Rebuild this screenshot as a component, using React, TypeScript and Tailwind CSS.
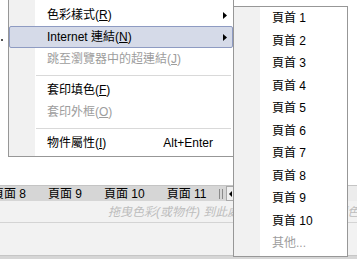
import type { ReactNode } from 'react'

const font = "font-['Liberation_Sans','Noto_Sans_CJK_TC',sans-serif]"

function Arrow() {
  return (
    <svg width="4" height="7" viewBox="0 0 4 7" className="shrink-0">
      <path d="M0 0 L4 3.5 L0 7 Z" fill="#000" />
    </svg>
  )
}

function Mn({ label, k }: { label: string; k: string }) {
  return (
    <span>
      {label}(<u>{k}</u>)
    </span>
  )
}

type ItemProps = {
  children: ReactNode
  disabled?: boolean
  active?: boolean
  arrow?: boolean
  shortcut?: string
}

function Item({ children, disabled, active, arrow, shortcut }: ItemProps) {
  return (
    <div
      className={`h-[22px] flex items-center pl-[37px] pr-[5px] border rounded-[2px] ${
        active ? 'border-[#8e9bc2] bg-[#d5dae8]' : 'border-transparent'
      } ${disabled ? 'text-[#9d9d9d]' : 'text-black'}`}
    >
      <span className="flex-1 whitespace-nowrap">{children}</span>
      {shortcut && <span className="pr-[14px]">{shortcut}</span>}
      {arrow && <Arrow />}
    </div>
  )
}

function Sep() {
  return (
    <div className="h-[9px] pt-[5px] pl-[27px] pr-[2px]">
      <div className="h-px bg-[#d9d9d9]" />
    </div>
  )
}

const pages = ['頁首 1', '頁首 2', '頁首 3', '頁首 4', '頁首 5', '頁首 6', '頁首 7', '頁首 8', '頁首 9', '頁首 10']

const tabs = ['頁面 8', '頁面 9', '頁面 10', '頁面 11']

export default function App() {
  return (
    <div className={`relative w-[357px] h-[259px] overflow-hidden bg-white text-[12px] leading-none ${font}`}>
      {/* page behind the menus */}
      <div className="flex flex-col h-full">
        <div className="h-[185px] pl-[1px] pt-[39px]">
          <div className="w-[2px] h-[2px] bg-[#555]" />
        </div>

        <div className="h-[16px] flex border-t border-[#c4c4c4] bg-[#d6d6d6]">
          <div className="flex -ml-[19px]">
            {tabs.map((t) => (
              <div key={t} className="px-[11px] flex items-center whitespace-nowrap text-black">
                {t}
              </div>
            ))}
          </div>
          <div className="flex items-center gap-[2px] px-[1px]">
            <div className="w-px h-[10px] bg-[#8a8a8a]" />
            <div className="w-px h-[10px] bg-[#8a8a8a]" />
          </div>
          <div className="ml-[2px] w-[9px] flex items-center justify-center border border-[#a9a9a9] bg-[#f0f0f0] text-[8px]">
            <svg width="3" height="6" viewBox="0 0 3 6">
              <path d="M3 0 L0 3 L3 6 Z" fill="#000" />
            </svg>
          </div>
          <div className="flex-1 bg-[#ececec]" />
        </div>

        <div className="h-[21px] flex items-center pl-[108px] bg-[#f2f2f2] whitespace-nowrap italic text-[#bdbdbd]">
          拖曳色彩(或物件) 到此處以建立新的佈景主題色彩
        </div>
        <div className="h-px bg-[#d4d4d4]" />
        <div className="flex-1 bg-[#f2f2f2]" />
        <div className="h-[4px] bg-[#d6d6d6] border-t border-[#c6c6c6]" />
      </div>

      {/* context menu */}
      <div className="absolute left-[8px] top-[-10px] w-[226px] border border-[#979797] pt-[13px] pb-[2px] bg-[linear-gradient(to_right,#f1f1f1_26px,#ffffff_26px)]">
        <Item arrow>
          <Mn label="色彩樣式" k="R" />
        </Item>
        <Item arrow active>
          <Mn label="Internet 連結" k="N" />
        </Item>
        <Item disabled>
          <Mn label="跳至瀏覽器中的超連結" k="J" />
        </Item>
        <Sep />
        <Item>
          <Mn label="套印填色" k="F" />
        </Item>
        <Item disabled>
          <Mn label="套印外框" k="O" />
        </Item>
        <Sep />
        <Item shortcut="Alt+Enter">
          <Mn label="物件屬性" k="I" />
        </Item>
      </div>

      {/* submenu */}
      <div className="absolute left-[233px] top-[6px] w-[115px] border border-[#979797] pb-[1px] bg-[linear-gradient(to_right,#f1f1f1_26px,#ffffff_26px)]">
        {pages.map((p) => (
          <div key={p} className="h-[22.5px] flex items-center pl-[38px] text-black whitespace-nowrap">
            {p}
          </div>
        ))}
        <div className="h-[22.5px] flex items-center pl-[38px] text-[#9d9d9d]">其他...</div>
      </div>
    </div>
  )
}
